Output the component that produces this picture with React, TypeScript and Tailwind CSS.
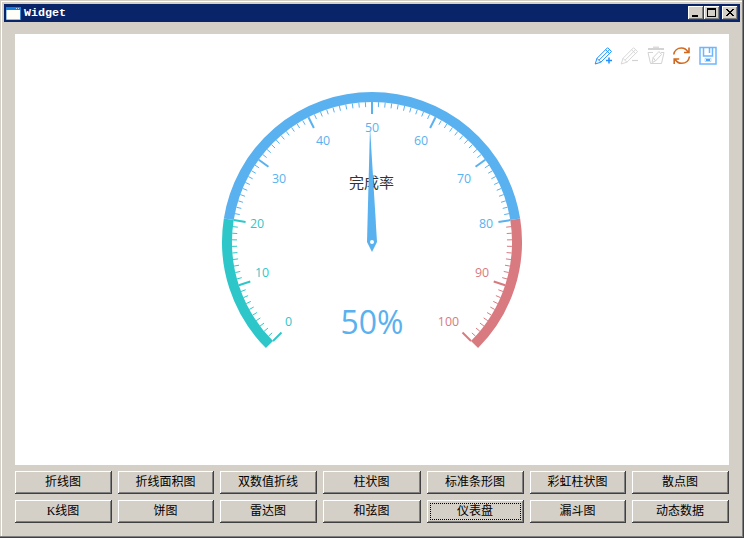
import React from "react";

const CX = 372 - 15;
const CY = 242 - 34;
const TEAL = "#2ec7c9";
const BLUE = "#5ab1ef";
const RED = "#d87a80";

const point = (value: number, r: number): [number, number] => {
  const a = ((225 - value * 2.7) * Math.PI) / 180;
  return [CX + r * Math.cos(a), CY - r * Math.sin(a)];
};

const colorOf = (v: number) => (v <= 20 ? TEAL : v <= 80 ? BLUE : RED);

const arc = (from: number, to: number) => {
  const [x1, y1] = point(from, 145);
  const [x2, y2] = point(to, 145);
  return `M${x1} ${y1}A145 145 0 0 1 ${x2} ${y2}`;
};

const labels: [string, number, number][] = [
  ["0", 288.5, 322],
  ["10", 262, 273],
  ["20", 257, 224],
  ["30", 279, 179],
  ["40", 323, 141],
  ["50", 372, 128],
  ["60", 421, 141],
  ["70", 464, 179],
  ["80", 486, 224],
  ["90", 482, 273],
  ["100", 448.5, 322],
];

const latin = '"Open Sans", "Noto Sans", sans-serif';
const cjk = '"Noto Sans CJK SC", sans-serif';

function Gauge() {
  return (
    <svg width="714" height="431" viewBox="0 0 714 431" className="block">
      <path d={arc(0, 20)} stroke={TEAL} strokeWidth="10" fill="none" />
      <path d={arc(20, 80)} stroke={BLUE} strokeWidth="10" fill="none" />
      <path d={arc(80, 100)} stroke={RED} strokeWidth="10" fill="none" />
      {Array.from({ length: 101 }, (_, i) => {
        const major = i % 10 === 0;
        const [x1, y1] = point(i, 140);
        const [x2, y2] = point(i, major ? 128 : 135);
        return (
          <line key={i} x1={x1} y1={y1} x2={x2} y2={y2} stroke={colorOf(i)} strokeWidth={major ? 2 : 1} />
        );
      })}
      {labels.map(([t, x, y]) => (
        <text key={t} x={x - 15} y={y - 34 + 4} textAnchor="middle" fontSize="12.4" fontFamily={latin} fill={colorOf(Number(t))}>
          {t}
        </text>
      ))}
      <text x={356.5} y={154} textAnchor="middle" fontSize="15" fontFamily={cjk} fill="#333">
        完成率
      </text>
      <text x={357} y={300} textAnchor="middle" fontSize="32" textLength="63" fontFamily={latin} fill={BLUE}>
        50%
      </text>
      <path d="M355 93L352 208L357 218L362 208Z" fill={BLUE} />
      <circle cx="357" cy="208" r="2" fill="#fff" />
    </svg>
  );
}

const pencil = "M1.2 18L3 12.3L13.6 1.7L17.5 5.6L6.9 16.2Z M3 12.3L6.9 16.2 M5 14.2L15.6 3.6 M11.6 3.7L15.5 7.6";

function Toolbox() {
  return (
    <div className="absolute top-[12px] right-[11px] flex gap-[6px]">
      <svg width="20" height="20" viewBox="0 0 20 20" fill="none" stroke="#1e90ff">
        <path d={pencil} strokeWidth="1" />
        <path d="M12 14.5H18M15 11.5V17.5" strokeWidth="1.5" />
      </svg>
      <svg width="20" height="20" viewBox="0 0 20 20" fill="none" stroke="#d3d3d3">
        <path d={pencil} strokeWidth="0.9" />
        <path d="M12 14.5H18" strokeWidth="1.2" />
      </svg>
      <svg width="20" height="20" viewBox="0 0 20 20" fill="none" stroke="#d3d3d3">
        <path d="M2 3H18" strokeWidth="2" />
        <path d="M7 1.2H13" strokeWidth="1.2" />
        <path d="M7 6.5H2L4.5 17.5H15.5L18 6.5H15M6 16.5L7.2 11.5L13 5.5L15.5 8.5L9.5 15ZM7.2 11.5L9.5 15" strokeWidth="1" />
      </svg>
      <svg width="20" height="20" viewBox="0 0 20 20" fill="none" stroke="#d2691e" strokeWidth="1.6">
        <path d="M1.8 8.5C2.3 4.5 5.5 2 9.5 2C12.5 2 14.5 3.5 16 6M17 1.5V6.5H12" />
        <path d="M17.5 10.5C17 14.5 14 17.3 9.7 17.3C6.7 17.3 4.7 16 3.2 13.5M2.2 18V13H7.2" />
      </svg>
      <svg width="20" height="20" viewBox="0 0 20 20" fill="none" stroke="#1e90ff">
        <path d="M2 1.5H18V18H2Z M5.5 1.5V10H14.5V1.5" strokeWidth="1.5" strokeOpacity=".65" />
        <path d="M11.5 2V7" strokeWidth="1.5" strokeOpacity=".65" />
        <path d="M7 12.5H13V15.5H7Z" strokeWidth="1" strokeOpacity=".3" />
        <path d="M8 14H12" strokeWidth="2" strokeOpacity=".8" />
      </svg>
    </div>
  );
}

const names = [
  "折线图", "折线面积图", "双数值折线", "柱状图", "标准条形图", "彩虹柱状图", "散点图",
  "K线图", "饼图", "雷达图", "和弦图", "仪表盘", "漏斗图", "动态数据",
];

const raised =
  "bg-[#d4d0c8] shadow-[inset_-1px_-1px_#404040,inset_1px_1px_#fff,inset_-2px_-2px_#808080]";

function CaptionButton({ children }: { children: React.ReactNode }) {
  return (
    <div className={`h-[14px] w-[16px] ${raised}`}>
      <svg width="16" height="14" viewBox="0 0 16 14" shapeRendering="crispEdges" className="block">
        {children}
      </svg>
    </div>
  );
}

export default function App() {
  return (
    <div className="flex h-[538px] w-[744px] flex-col bg-[#d4d0c8] p-[4px] shadow-[inset_-1px_-1px_#404040,inset_-2px_-2px_#808080,inset_1px_1px_#d4d0c8,inset_2px_2px_#fff]">
      <div className="flex h-[18px] shrink-0 items-center bg-[#0a246a] px-[2px]">
        <svg width="15" height="13" viewBox="0 0 15 13" className="block">
          <rect width="15" height="13" fill="#3b82c8" />
          <rect width="15" height="3" fill="#1680e0" />
          <rect x="0.5" y="3" width="13.5" height="9.5" fill="#fffff8" />
          <path d="M10 1.5H11M12 1.5H13" stroke="#b8dcff" />
        </svg>
        <span
          className="ml-[3px] flex-1 text-[11.67px] leading-[18px] font-bold text-white"
          style={{ fontFamily: '"Liberation Mono", monospace' }}
        >
          Widget
        </span>
        <CaptionButton>
          <rect x="4" y="9" width="6" height="2" />
        </CaptionButton>
        <CaptionButton>
          <path d="M3 2H12V11H3ZM4 4V10H11V4Z" fillRule="evenodd" />
        </CaptionButton>
        <div className="w-[2px]" />
        <CaptionButton>
          <path d="M4 3h2v1h1v1h2v-1h1v-1h2v1h-1v1h-1v1h-1v1h1v1h1v1h1v1h-2v-1h-1v-1h-2v1h-1v1h-2v-1h1v-1h1v-1h1v-1h-1v-1h-1v-1h-1z" />
        </CaptionButton>
      </div>
      <main className="px-[11px] pt-[12px]">
        <section className="relative h-[431px] w-[714px] bg-white">
          <Gauge />
          <Toolbox />
        </section>
        <div className="mt-[6px] grid w-[714px] grid-cols-[97px_96px_97px_98px_97px_96px_97px] gap-[6px]">
          {names.map((name) => (
            <button
              key={name}
              className={`relative flex h-[23px] items-center justify-center pr-px pb-px text-[12px] leading-[18px] whitespace-nowrap text-black ${raised}`}
              style={{ fontFamily: '"Liberation Serif", "Noto Sans CJK SC", sans-serif' }}
            >
              {name}
              {name === "仪表盘" && (
                <span className="absolute inset-[3px] border border-dotted border-black" />
              )}
            </button>
          ))}
        </div>
      </main>
    </div>
  );
}
